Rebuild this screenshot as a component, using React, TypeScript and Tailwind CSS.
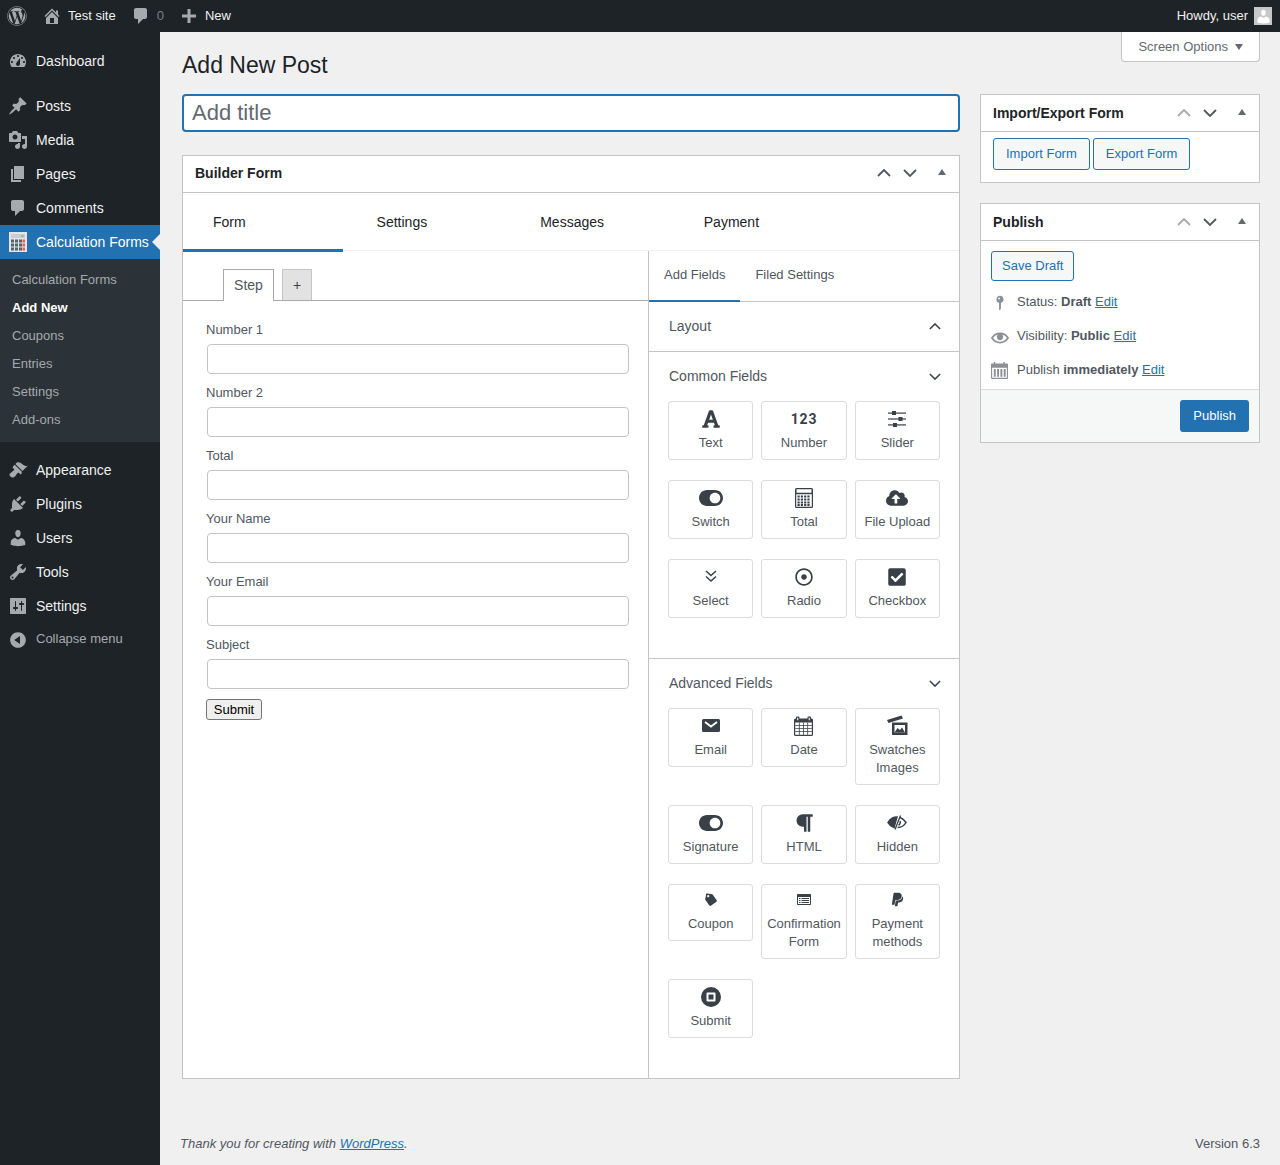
import type { ReactNode } from "react";
import {
  FaCheckSquare,
  FaCloudUploadAlt,
  FaFont,
  FaParagraph,
  FaPaypal,
  FaRegDotCircle,
  FaTag,
  FaToggleOn,
  FaWordpress,
} from "react-icons/fa";

const dash = {
  dashboard:
    "M3.76 16h12.48c1.1-1.37 1.76-3.11 1.76-5 0-4.42-3.58-8-8-8s-8 3.58-8 8c0 1.89.66 3.63 1.76 5zM10 4c.55 0 1 .45 1 1s-.45 1-1 1-1-.45-1-1 .45-1 1-1zM6 6c.55 0 1 .45 1 1s-.45 1-1 1-1-.45-1-1 .45-1 1-1zm8 0c.55 0 1 .45 1 1s-.45 1-1 1-1-.45-1-1 .45-1 1-1zm-5.37 5.55L12 7v6c0 1.1-.9 2-2 2s-2-.9-2-2c0-.57.24-1.08.63-1.45zM4 10c.55 0 1 .45 1 1s-.45 1-1 1-1-.45-1-1 .45-1 1-1zm12 0c.55 0 1 .45 1 1s-.45 1-1 1-1-.45-1-1 .45-1 1-1z",
  post: "M10.44 3.02l1.82-1.82 6.36 6.35-1.83 1.82c-1.05-.68-2.48-.57-3.41.36l-.75.75c-.92.93-1.04 2.35-.35 3.41l-1.83 1.82-2.41-2.41-2.8 2.79c-.42.42-3.38 2.71-3.8 2.29s1.86-3.39 2.28-3.81l2.79-2.79L4.1 9.36l1.83-1.82c1.05.69 2.48.57 3.4-.36l.75-.75c.93-.92 1.05-2.35.36-3.41z",
  media:
    "M13 11V4c0-.55-.45-1-1-1h-1.67L9 1H5L3.67 3H2c-.55 0-1 .45-1 1v7c0 .55.45 1 1 1h10c.55 0 1-.45 1-1zM7 4.5c1.38 0 2.5 1.12 2.5 2.5S8.38 9.5 7 9.5 4.5 8.38 4.5 7 5.62 4.5 7 4.5zM14 6h5v10.5c0 1.38-1.12 2.5-2.5 2.5S14 17.88 14 16.5s1.12-2.5 2.5-2.5c.17 0 .34.02.5.05V9h-3V6zm-4 8.05V13h2v3.5c0 1.38-1.12 2.5-2.5 2.5S7 17.88 7 16.5 8.12 14 9.5 14c.17 0 .34.02.5.05z",
  page: "M6 15V2h10v13H6zm-1 1h8v2H3V5h2v11z",
  comment: "M5 2h9c1.1 0 2 .9 2 2v7c0 1.1-.9 2-2 2h-2l-5 5v-5H5c-1.1 0-2-.9-2-2V4c0-1.1.9-2 2-2z",
  appearance:
    "M14.48 11.06L7.41 3.99l1.5-1.5c.5-.56 2.3-.47 3.51.32 1.21.8 1.43 1.28 2.91 2.1 1.18.64 2.45 1.26 4.45.85zm-.71.71L6.7 4.7 4.93 6.47c-.39.39-.39 1.02 0 1.41l1.06 1.06c.39.39.39 1.03 0 1.42-.6.6-1.43 1.11-2.21 1.69-.35.26-.7.53-1.01.84C1.43 13.23.91 15 2.43 16.5c1.51 1.51 3.36.99 4.69-.34.3-.3.58-.65.84-1.01.58-.78 1.09-1.61 1.69-2.21.39-.39 1.02-.39 1.41 0l1.06 1.06c.39.39 1.02.39 1.41 0z",
  plugin:
    "M13.11 4.36L9.87 7.6 8 5.73l3.24-3.24c.35-.34 1.05-.2 1.56.32.52.51.66 1.21.31 1.55zm-8 1.77l.91-1.12 9.01 9.01-1.19.84c-.71.71-2.63 1.16-3.82 1.16H6.14L4.9 17.26c-.59.59-1.54.59-2.12 0-.59-.58-.59-1.53 0-2.12l1.24-1.24v-3.88c0-1.13.4-3.19 1.09-3.89zm7.26 3.97l3.24-3.24c.34-.35 1.04-.21 1.55.31.52.51.66 1.21.31 1.55l-3.24 3.25z",
  users:
    "M10 9.25c-2.27 0-2.73-3.44-2.73-3.44C7 4.02 7.82 2 9.97 2c2.16 0 2.98 2.02 2.71 3.81 0 0-.41 3.44-2.68 3.44zm0 2.57L12.72 10c2.39 0 4.52 2.33 4.52 4.53v2.49s-3.65 1.13-7.24 1.13c-3.65 0-7.24-1.13-7.24-1.13v-2.49c0-2.25 1.94-4.48 4.47-4.48z",
  tools:
    "M16.68 9.77c-1.34 1.34-3.3 1.67-4.95.99l-5.41 6.52c-.99.99-2.59.99-3.58 0s-.99-2.59 0-3.57l6.52-5.42c-.68-1.65-.35-3.61.99-4.95 1.28-1.28 3.12-1.62 4.72-1.06l-2.89 2.89 2.82 2.82 2.86-2.87c.53 1.58.18 3.39-1.08 4.65zM3.81 16.21c.4.39 1.04.39 1.43 0 .4-.4.4-1.04 0-1.43-.39-.4-1.03-.4-1.43 0-.39.39-.39 1.03 0 1.43z",
  settings:
    "M18 17V3c0-.55-.45-1-1-1H3c-.55 0-1 .45-1 1v14c0 .55.45 1 1 1h14c.55 0 1-.45 1-1zM8 11h1c.55 0 1 .45 1 1s-.45 1-1 1H8v1.5c0 .28-.22.5-.5.5s-.5-.22-.5-.5V13H6c-.55 0-1-.45-1-1s.45-1 1-1h1V5.5c0-.28.22-.5.5-.5s.5.22.5.5V11zm5-2h-1c-.55 0-1-.45-1-1s.45-1 1-1h1V5.5c0-.28.22-.5.5-.5s.5.22.5.5V7h1c.55 0 1 .45 1 1s-.45 1-1 1h-1v5.5c0 .28-.22.5-.5.5s-.5-.22-.5-.5V9z",
  collapse:
    "M10 2.16c4.33 0 7.84 3.51 7.84 7.84s-3.51 7.84-7.84 7.84S2.16 14.33 2.16 10 5.67 2.16 10 2.16zm2 11.72V6.12L6.18 9.88z",
  home: "M16 8.5l1.53 1.53-1.06 1.06L10 4.62l-6.47 6.47-1.06-1.06L10 2.5l4 4v-2h2v4zm-6-2.46l6 5.99V18H4v-5.97zM12 17v-5H8v5h4z",
  plus: "M17 8.5v3h-5.5V17h-3v-5.5H3v-3h5.5V3h3v5.5z",
  pin: "M14 6c0 1.86-1.28 3.41-3 3.86V16c0 1-2 2-2 2V9.86c-1.72-.45-3-2-3-3.86 0-2.21 1.79-4 4-4s4 1.79 4 4zM8 5c0 .55.45 1 1 1s1-.45 1-1-.45-1-1-1-1 .45-1 1z",
  eye: "M19.7 9.4C17.7 6 14 3.9 10 3.9S2.3 6 .3 9.4L0 10l.3.6c2 3.4 5.7 5.5 9.7 5.5s7.7-2.1 9.7-5.5l.3-.6-.3-.6zM10 14.1c-3.1 0-6-1.6-7.7-4.1C3.6 8 5.7 6.6 8 6.1c-.9.6-1.5 1.7-1.5 2.9 0 1.9 1.6 3.5 3.5 3.5s3.5-1.6 3.5-3.5c0-1.2-.6-2.3-1.5-2.9 2.3.5 4.4 1.9 5.7 3.9-1.7 2.5-4.6 4.1-7.7 4.1z",
};

const ink = "#3a4048";

function Dash({ d, size = 20, className = "" }: { d: string; size?: number; className?: string }) {
  return (
    <svg viewBox="0 0 20 20" width={size} height={size} className={className} fill="currentColor">
      <path d={d} />
    </svg>
  );
}

function CalcLogo() {
  return (
    <svg viewBox="0 0 18 20" width="18" height="20">
      <rect width="18" height="20" fill="#e3e6e8" />
      <rect x="2" y="2" width="14" height="4" fill="#c9ced1" />
      <rect x="12" y="3" width="3" height="2" fill="#aeb4b8" />
      {[7.5, 11.5, 15.5].map((y) =>
        [2, 6, 10, 13.5].map((x) => (
          <rect
            key={`${x}-${y}`}
            x={x}
            y={y}
            width={x === 13.5 ? 2.5 : 3}
            height="3"
            fill={x === 13.5 ? "#e8604f" : "#59636b"}
          />
        )),
      )}
    </svg>
  );
}

function SliderIcon() {
  return (
    <svg viewBox="0 0 18 18" width="18" height="18" fill={ink}>
      <rect y="2.5" width="18" height="1.2" />
      <rect y="8.4" width="18" height="1.2" />
      <rect y="14.3" width="18" height="1.2" />
      <rect x="4" y="1" width="4" height="4" />
      <rect x="10.5" y="7" width="4" height="4" />
      <rect x="5" y="13" width="4" height="4" />
    </svg>
  );
}

function CalculatorIcon() {
  return (
    <svg viewBox="0 0 18 20" width="18" height="20" fill={ink}>
      <path
        d="M1.5 0h15A1.5 1.5 0 0 1 18 1.5v17a1.5 1.5 0 0 1-1.5 1.5h-15A1.5 1.5 0 0 1 0 18.5v-17A1.5 1.5 0 0 1 1.5 0zM1.5 1.2v3.6h15V1.2zM1.2 6.2v12.6h15.6V6.2z"
        fillRule="evenodd"
      />
      {[7.5, 10.5, 13.5, 16].map((y) =>
        [2.5, 5.8, 9.1, 12.4].map((x) => <rect key={`${x}-${y}`} x={x} y={y} width="2.2" height="2" />),
      )}
    </svg>
  );
}

function SelectIcon() {
  return (
    <svg viewBox="0 0 14 13" width="14" height="13" fill="none" stroke={ink} strokeWidth="1.5">
      <path d="M2 1l5 4.5 5-4.5M2 6.5l5 4.5 5-4.5" />
    </svg>
  );
}

function DateIcon() {
  return (
    <svg viewBox="0 0 19 20" width="19" height="20" fill={ink}>
      <path
        d="M3 .5h1.5a1 1 0 0 1 1 1v1h8v-1a1 1 0 0 1 1-1H16a1 1 0 0 1 1 1v1h.5A1.5 1.5 0 0 1 19 4v14.5a1.5 1.5 0 0 1-1.5 1.5h-16A1.5 1.5 0 0 1 0 18.5V4a1.5 1.5 0 0 1 1.5-1.5H2v-1a1 1 0 0 1 1-1zM3.2 1.7v2.6h1.1V1.7zM14.7 1.7v2.6h1.1V1.7zM1.2 6.5v12.3h16.6V6.5z"
        fillRule="evenodd"
      />
      <path d="M4.9 6.5h.8v12.3h-.8zM9.1 6.5h.8v12.3h-.8zM13.3 6.5h.8v12.3h-.8zM1.2 9.3h16.6v.8H1.2zM1.2 12.3h16.6v.8H1.2zM1.2 15.3h16.6v.8H1.2z" />
    </svg>
  );
}

function EnvelopeIcon() {
  return (
    <svg viewBox="0 0 18 13" width="18" height="13">
      <rect width="18" height="13" rx="1.5" fill={ink} />
      <path d="M3 3l6 4.5L15 3" fill="none" stroke="#fff" strokeWidth="1.8" />
    </svg>
  );
}

function SwatchIcon() {
  return (
    <svg viewBox="0 0 21 21" width="21" height="21" fill={ink}>
      <path d="M0 5L14.5.5 16 3.500 1.500 8z" />
      <path d="M5 7.500h15.500V20H5zM7.500 10v7.500H18V10z" fillRule="evenodd" />
      <path d="M7.500 17.500l3-4.500 2.500 2 2-2.500 3 5z" />
    </svg>
  );
}

function HiddenIcon() {
  return (
    <svg viewBox="0 0 20 15" width="20" height="15" fill="none" stroke={ink} strokeWidth="1.5">
      <path d="M1 7.5C3 4 6.500 2 10 2L7 12.500C4.500 11.500 2.500 10 1 7.500z" fill={ink} />
      <path d="M13 2.500c2.500.8 4.500 2.700 6 5-1.500 2.700-4.500 5-8.500 5" />
      <path d="M13.500.5L8 14.500" strokeWidth="1.3" />
      <path d="M13 6c.7 1.500 0 3.500-1.500 4.300" />
    </svg>
  );
}

function ListIcon() {
  return (
    <svg viewBox="0 0 14 11" width="14" height="11" fill={ink}>
      <path
        d="M.8 0h12.400c.4 0 .8.4.8.8v9.400c0 .4-.4.8-.8.8H.8c-.4 0-.8-.4-.8-.8V.8C0 .4.4 0 .8 0zM1 3v7h12V3z"
        fillRule="evenodd"
      />
      <path d="M2 4h1.500v1H2zM4.500 4H12v1H4.500zM2 6h1.500v1H2zM4.500 6H12v1H4.500zM2 8h1.500v1H2zM4.500 8H12v1H4.500z" />
    </svg>
  );
}

function SubmitIcon() {
  return (
    <svg viewBox="0 0 20 20" width="20" height="20">
      <circle cx="10" cy="10" r="10" fill={ink} />
      <rect x="5.5" y="5.5" width="9" height="9" rx="1" fill="#fff" />
      <rect x="7.5" y="7.5" width="5" height="5" fill={ink} />
    </svg>
  );
}

function CalendarSmall() {
  return (
    <svg viewBox="0 0 18 18" width="17" height="17" fill="#8c8f94">
      <path
        d="M3 0h1.500v1.500H13V0h1.500v1.500H17c.5 0 1 .5 1 1V17c0 .5-.5 1-1 1H1c-.5 0-1-.5-1-1V2.500c0-.5.5-1 1-1h2zM1.200 6v10.800h15.600V6z"
        fillRule="evenodd"
      />
      <path d="M3 7.500h2v8H3zM6.500 7.500h2v8h-2zM10 7.500h2v8h-2zM13.500 7.500h2v8h-2z" />
    </svg>
  );
}

function Chevron({ up = false, small = false, className = "" }: { up?: boolean; small?: boolean; className?: string }) {
  return (
    <svg
      viewBox="0 0 14 8"
      width={small ? 12 : 14}
      height={small ? 7 : 8}
      fill="none"
      stroke="currentColor"
      strokeWidth="1.8"
      className={className}
    >
      <path d={up ? "M1 7l6-6 6 6" : "M1 1l6 6 6-6"} />
    </svg>
  );
}

function Handles({ upDark = false }: { upDark?: boolean }) {
  return (
    <div className="flex items-center">
      <span className="flex w-[26px] justify-center">
        <Chevron up className={upDark ? "text-[#50575e]" : "text-[#a7aaad]"} />
      </span>
      <span className="flex w-[26px] justify-center">
        <Chevron className="text-[#50575e]" />
      </span>
      <span className="flex w-[36px] justify-center pb-[3px] pl-[2px]">
        <span className="h-0 w-0 border-x-[4px] border-b-[6px] border-x-transparent border-b-[#646970]" />
      </span>
    </div>
  );
}

function Card({
  title,
  upDark,
  headerClass = "",
  children,
}: {
  title: string;
  upDark?: boolean;
  headerClass?: string;
  children: ReactNode;
}) {
  return (
    <section className="border border-[#c3c4c7] bg-white">
      <header className={`flex h-[37px] items-center justify-between border-b border-[#c3c4c7] pl-3 ${headerClass}`}>
        <h2 className="text-[14px] font-bold text-[#1d2327]">{title}</h2>
        <Handles upDark={upDark} />
      </header>
      {children}
    </section>
  );
}

const topMenu = [{ icon: dash.dashboard, label: "Dashboard" }];
const contentMenu = [
  { icon: dash.post, label: "Posts" },
  { icon: dash.media, label: "Media" },
  { icon: dash.page, label: "Pages" },
  { icon: dash.comment, label: "Comments" },
];
const adminMenu = [
  { icon: dash.appearance, label: "Appearance" },
  { icon: dash.plugin, label: "Plugins" },
  { icon: dash.users, label: "Users" },
  { icon: dash.tools, label: "Tools" },
  { icon: dash.settings, label: "Settings" },
];
const subMenu = ["Calculation Forms", "Add New", "Coupons", "Entries", "Settings", "Add-ons"];

function MenuItem({ icon, label }: { icon: string; label: string }) {
  return (
    <a className="flex h-[34px] items-center text-[14px] text-[#f0f0f1]">
      <span className="flex w-9 justify-center text-[#a7aaad]">
        <Dash d={icon} />
      </span>
      {label}
    </a>
  );
}

function Sidebar() {
  return (
    <aside className="w-40 shrink-0 bg-[#1d2327] pt-3">
      {topMenu.map((m) => (
        <MenuItem key={m.label} {...m} />
      ))}
      <div className="h-[11px]" />
      {contentMenu.map((m) => (
        <MenuItem key={m.label} {...m} />
      ))}
      <a className="relative flex h-[34px] items-center bg-[#2271b1] text-[14px] text-white">
        <span className="flex w-9 justify-center">
          <CalcLogo />
        </span>
        Calculation Forms
        <span className="absolute right-0 top-[9px] h-0 w-0 border-y-[8px] border-r-[8px] border-y-transparent border-r-[#f0f0f1]" />
      </a>
      <ul className="bg-[#2c3338] pb-2 pt-[7px]">
        {subMenu.map((s) => (
          <li
            key={s}
            className={`flex h-[28px] items-center pl-3 text-[13px] ${s === "Add New" ? "font-bold text-white" : "text-[#a5a9ad]"}`}
          >
            {s}
          </li>
        ))}
      </ul>
      <div className="h-[11px]" />
      {adminMenu.map((m) => (
        <MenuItem key={m.label} {...m} />
      ))}
      <div className="flex h-[32px] items-center text-[13px] text-[#a7aaad]">
        <span className="flex w-9 justify-center pt-[2px] text-[#a7aaad]">
          <Dash d={dash.collapse} />
        </span>
        Collapse menu
      </div>
    </aside>
  );
}

function AdminBar() {
  return (
    <div className="flex h-8 items-center justify-between bg-[#1d2327] text-[13px] text-[#f0f0f1]">
      <div className="flex items-center">
        <FaWordpress className="ml-[7px] text-[#a7aaad]" size={20} />
        <Dash d={dash.home} className="ml-[15px] text-[#a7aaad]" size={20} />
        <span className="ml-[6px]">Test site</span>
        <Dash d={dash.comment} className="ml-[15px] text-[#a7aaad]" size={20} />
        <span className="ml-[6px] text-[#7c8085]">0</span>
        <Dash d={dash.plus} className="ml-[15px] text-[#a7aaad]" size={20} />
        <span className="ml-[6px]">New</span>
      </div>
      <div className="flex items-center pr-2">
        <span>Howdy, user</span>
        <span className="ml-[6px] flex h-[18px] w-[18px] items-end justify-center overflow-hidden bg-[#c7c7c7]">
          <Dash d={dash.users} size={17} className="text-white" />
        </span>
      </div>
    </div>
  );
}

type Tile = { label: ReactNode; icon: ReactNode; compact?: boolean };

const dark = "text-[#3a4048]";

const commonFields: Tile[] = [
  { label: "Text", icon: <FaFont size={20} className={dark} /> },
  {
    label: "Number",
    icon: <span className="font-['Roboto',sans-serif] text-[14px] font-bold tracking-[0.8px] text-[#3a4048]">123</span>,
  },
  { label: "Slider", icon: <SliderIcon /> },
  { label: "Switch", icon: <FaToggleOn size={24} className={dark} /> },
  { label: "Total", icon: <CalculatorIcon /> },
  { label: "File Upload", icon: <FaCloudUploadAlt size={22} className={dark} /> },
  { label: "Select", icon: <SelectIcon /> },
  { label: "Radio", icon: <FaRegDotCircle size={18} className={dark} /> },
  { label: "Checkbox", icon: <FaCheckSquare size={20} className={dark} /> },
];

const advancedFields: Tile[] = [
  { label: "Email", icon: <EnvelopeIcon /> },
  { label: "Date", icon: <DateIcon /> },
  { label: "Swatches Images", icon: <SwatchIcon /> },
  { label: "Signature", icon: <FaToggleOn size={24} className={dark} /> },
  { label: "HTML", icon: <FaParagraph size={20} className={dark} /> },
  { label: "Hidden", icon: <HiddenIcon /> },
  { label: "Coupon", compact: true, icon: <FaTag size={12} className={`${dark} rotate-[10deg]`} /> },
  { label: "Confirmation Form", compact: true, icon: <ListIcon /> },
  { label: "Payment methods", compact: true, icon: <FaPaypal size={15} className={dark} /> },
  { label: "Submit", icon: <SubmitIcon /> },
];

function FieldTile({ tile }: { tile: Tile }) {
  return (
    <div className="rounded-[3px] border border-[#dcdcde] px-1 pb-[7px] pt-[7px] text-center text-[13px] leading-[18px] text-[#50575e]">
      <div className={`flex items-center justify-center ${tile.compact ? "mb-[8px] h-[15px]" : "mb-[6px] h-[19px]"}`}>
        {tile.icon}
      </div>
      {tile.label}
    </div>
  );
}

function FieldGroup({ title, open, items, last }: { title: string; open: boolean; items?: Tile[]; last?: boolean }) {
  return (
    <div className={last ? "" : "border-b border-[#c3c4c7]"}>
      <div className="flex h-[49px] items-center justify-between pl-5 pr-[18px] text-[14px] text-[#50575e]">
        {title}
        <Chevron small up={!open} className="text-[#3c434a]" />
      </div>
      {items && (
        <div className="grid grid-cols-3 items-start gap-x-2 gap-y-5 px-[19px] pb-10">
          {items.map((t, i) => (
            <FieldTile key={i} tile={t} />
          ))}
        </div>
      )}
    </div>
  );
}

const formFields = ["Number 1", "Number 2", "Total", "Your Name", "Your Email", "Subject"];

function BuilderForm() {
  return (
    <Card title="Builder Form" upDark headerClass="pb-[2px]">
      <div className="flex h-[58px] gap-[3.6px] border-b border-[#f0f0f1] text-[14px] text-[#1d2327]">
        {["Form", "Settings", "Messages", "Payment"].map((t, i) => (
          <a
            key={t}
            className={`flex h-[59px] w-40 items-center pl-[30px] ${i === 0 ? "border-b-[3px] border-[#2271b1] pt-[2px]" : "pb-[1px]"}`}
          >
            {t}
          </a>
        ))}
      </div>
      <div className="flex">
        <div className="w-[465px]">
          <div className="flex h-[50px] items-end gap-2 border-b border-[#a7aaad] pl-10">
            <span className="-mb-px flex h-[32px] w-[51px] items-center justify-center border border-b-0 border-[#a7aaad] bg-white text-[14px] text-[#50575e]">
              Step
            </span>
            <span className="flex h-[31px] w-[30px] items-center justify-center border border-b-0 border-[#c3c4c7] bg-[#e2e2e2] text-[14px] text-[#3c434a]">
              +
            </span>
          </div>
          <form className="pl-[23px] pt-[18px]">
            {formFields.map((f) => (
              <div key={f} className="mb-2">
                <label className="mb-[5px] block h-5 pt-px text-[13px] leading-5 text-[#50575e]">{f}</label>
                <input className="ml-px block h-[30px] w-[422px] rounded-[4px] border border-[#c3c4c7] bg-white" />
              </div>
            ))}
            <button
              type="button"
              className="mt-[10px] flex h-[21px] w-14 items-center justify-center rounded-[3px] border border-[#767676] bg-[#efefef] text-[13px] text-black"
            >
              Submit
            </button>
          </form>
        </div>
        <div className="w-[311px] border-l border-[#c3c4c7]">
          <div className="flex h-[51px] border-b border-[#c3c4c7] text-[13px] text-[#50575e]">
            <a className="flex h-[51px] items-center border-b-2 border-[#2271b1] px-[15px] pb-[1px]">Add Fields</a>
            <a className="flex h-[50px] items-center px-[15px] pb-[2px]">Filed Settings</a>
          </div>
          <FieldGroup title="Layout" open={false} />
          <FieldGroup title="Common Fields" open items={commonFields} />
          <FieldGroup title="Advanced Fields" open items={advancedFields} last />
        </div>
      </div>
    </Card>
  );
}

const outline =
  "flex items-center rounded-[3px] border border-[#2271b1] bg-[#f6f7f7] px-3 text-[13px] text-[#2271b1]";

function PublishRow({ icon, children }: { icon: ReactNode; children: ReactNode }) {
  return (
    <div className="flex h-[34px] items-center pl-[10px] text-[13px] text-[#50575e]">
      <span className="flex w-[26px] items-center pr-2">{icon}</span>
      <span>
        {children} <a className="text-[#2271b1] underline">Edit</a>
      </span>
    </div>
  );
}

function SideColumn() {
  return (
    <div className="flex w-[280px] shrink-0 flex-col gap-5">
      <Card title="Import/Export Form">
        <div className="flex gap-[3px] pb-3 pl-3 pt-[6px]">
          <button type="button" className={`${outline} h-8`}>
            Import Form
          </button>
          <button type="button" className={`${outline} h-8`}>
            Export Form
          </button>
        </div>
      </Card>
      <Card title="Publish">
        <div className="pl-[10px] pt-[10px]">
          <button type="button" className={`${outline} mb-1 h-[30px] px-[10px]`}>
            Save Draft
          </button>
        </div>
        <PublishRow icon={<Dash d={dash.pin} size={20} className="mt-[2px] text-[#8c8f94]" />}>
          Status: <b>Draft</b>
        </PublishRow>
        <PublishRow icon={<Dash d={dash.eye} size={18} className="mt-[3px] text-[#8c8f94]" />}>
          Visibility: <b>Public</b>
        </PublishRow>
        <PublishRow icon={<CalendarSmall />}>
          Publish <b>immediately</b>
        </PublishRow>
        <div className="mt-[2px] flex justify-end border-t border-[#dcdcde] bg-[#f6f7f7] p-[10px]">
          <button
            type="button"
            className="flex h-8 items-center rounded-[3px] bg-[#2271b1] px-[13px] text-[13px] text-white"
          >
            Publish
          </button>
        </div>
      </Card>
    </div>
  );
}

export default function App() {
  return (
    <div className="flex min-h-[1165px] flex-col bg-[#f0f0f1] font-['Liberation_Sans',Arial,sans-serif]">
      <AdminBar />
      <div className="flex flex-1">
        <Sidebar />
        <main className="flex flex-1 flex-col pl-5 pr-5">
          <div className="flex h-[62px] items-start justify-between pl-[2px]">
            <h1 className="pt-[18px] text-[23px] leading-[30px] text-[#1d2327]">Add New Post</h1>
            <button
              type="button"
              className="flex h-[30px] items-center gap-[7px] rounded-b-[4px] border border-t-0 border-[#c3c4c7] bg-white pl-4 pr-4 text-[13px] text-[#646970]"
            >
              Screen Options
              <span className="mt-[1px] h-0 w-0 border-x-[4.5px] border-t-[6px] border-x-transparent border-t-[#646970]" />
            </button>
          </div>
          <div className="flex items-start gap-5 pl-[2px]">
            <div className="w-[778px] shrink-0">
              <input
                placeholder="Add title"
                className="mb-[23px] block h-[38px] w-full rounded-[4px] border-2 border-[#2271b1] bg-white px-2 text-[22px] text-[#1d2327] outline-none placeholder:text-[#646970]"
              />
              <BuilderForm />
            </div>
            <SideColumn />
          </div>
          <footer className="mt-auto flex h-[31px] justify-between pb-[11px] text-[13px] leading-5 text-[#50575e]">
            <i>
              Thank you for creating with <a className="text-[#2271b1] underline">WordPress</a>.
            </i>
            <span>Version 6.3</span>
          </footer>
        </main>
      </div>
    </div>
  );
}
